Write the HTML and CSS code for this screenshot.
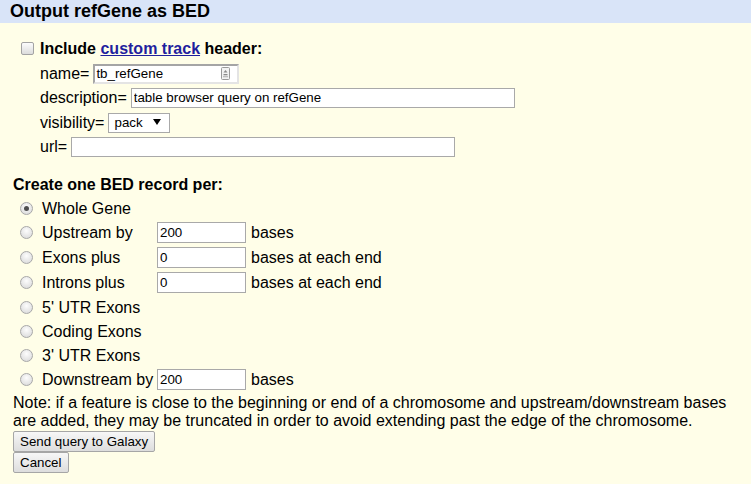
FILE: index.html
```html
<!DOCTYPE html>
<html>
<head>
<meta charset="utf-8">
<link rel="stylesheet" href="styles.css">
</head>
<body>
<div class="title">Output refGene as BED</div>
<form class="main">
  <label class="check-row">
    <input type="checkbox" class="cb">
    <span class="bold">Include <a href="#" class="link">custom track</a> header:</span>
  </label>
  <div class="fields">
    <div class="field">
      <span>name=</span>
      <span class="name-wrap">
        <input type="text" class="txt name-input" value="tb_refGene">
        <svg class="autofill" width="9" height="13" viewBox="0 0 9 13"><rect x="0.5" y="0.5" width="8" height="12" rx="1" fill="#f3f3f3" stroke="#9a9a9a"/><path d="M4.5 3 L6.5 5.5 L2.5 5.5 Z" fill="#8a8a8a"/><rect x="2.5" y="7" width="4" height="1.3" fill="#8a8a8a"/><rect x="2" y="9" width="5" height="1.3" fill="#bdbdbd"/></svg>
      </span>
    </div>
    <div class="field">
      <span>description=</span>
      <input type="text" class="txt wide" value="table browser query on refGene">
    </div>
    <div class="field">
      <span>visibility=</span>
      <span class="sel-wrap">
        <select class="sel"><option>pack</option></select>
        <svg class="arrow" width="8" height="6" viewBox="0 0 8 6"><path d="M0 0 H8 L4 6 Z" fill="#000"/></svg>
      </span>
    </div>
    <div class="field">
      <span>url=</span>
      <input type="text" class="txt wide" value="">
    </div>
  </div>

  <div class="heading bold">Create one BED record per:</div>
  <div class="options">
    <label class="opt"><input type="radio" name="r" class="rd" checked><span class="lbl">Whole Gene</span></label>
    <label class="opt tall"><input type="radio" name="r" class="rd"><span class="lbl">Upstream by</span><input type="text" class="txt num" value="200"><span class="suf">bases</span></label>
    <label class="opt tall"><input type="radio" name="r" class="rd"><span class="lbl">Exons plus</span><input type="text" class="txt num" value="0"><span class="suf">bases at each end</span></label>
    <label class="opt tall"><input type="radio" name="r" class="rd"><span class="lbl">Introns plus</span><input type="text" class="txt num" value="0"><span class="suf">bases at each end</span></label>
    <label class="opt"><input type="radio" name="r" class="rd"><span class="lbl">5' UTR Exons</span></label>
    <label class="opt"><input type="radio" name="r" class="rd"><span class="lbl">Coding Exons</span></label>
    <label class="opt"><input type="radio" name="r" class="rd"><span class="lbl">3' UTR Exons</span></label>
    <label class="opt tall"><input type="radio" name="r" class="rd"><span class="lbl">Downstream by</span><input type="text" class="txt num" value="200"><span class="suf">bases</span></label>
  </div>
  <p class="note">Note: if a feature is close to the beginning or end of a chromosome and upstream/downstream bases are added, they may be truncated in order to avoid extending past the edge of the chromosome.</p>
  <div class="buttons">
    <button type="button" class="btn">Send query to Galaxy</button>
    <button type="button" class="btn">Cancel</button>
  </div>
</form>
</body>
</html>
```

FILE: styles.css
```css
html, body {
  margin: 0;
  padding: 0;
}
body {
  background: #fffee8;
  font-family: "Liberation Sans", Arial, sans-serif;
  font-size: 16px;
  color: #000;
}
.title {
  background: #d9e4f8;
  height: 23px;
  line-height: 23px;
  font-size: 18px;
  font-weight: bold;
  padding-left: 10px;
}
.main {
  margin: 0;
  padding: 16px 0 0 13px;
}
.bold {
  font-weight: bold;
}
.link {
  color: #1f1f9e;
  text-decoration: underline;
}
.check-row {
  display: flex;
  align-items: center;
  height: 19px;
  line-height: 19px;
  padding-left: 8px;
}
.cb {
  appearance: none;
  -webkit-appearance: none;
  width: 13px;
  height: 13px;
  margin: 0 6px 0 0;
  border: 1px solid #a3a3a3;
  border-radius: 2px;
  background: linear-gradient(#fcfcfc, #dcdcdc);
  box-sizing: border-box;
}
.fields {
  display: flex;
  flex-direction: column;
  gap: 4.5px;
  margin-top: 5px;
  padding-left: 27px;
}
.field {
  display: flex;
  align-items: center;
  gap: 4px;
  height: 20px;
  line-height: 19px;
}
.txt {
  box-sizing: border-box;
  height: 20px;
  margin: 0;
  padding: 1px 2px;
  border: 1px solid #a9a9a9;
  background: #fff;
  font-family: "Liberation Sans", Arial, sans-serif;
  font-size: 13.33px;
  color: #000;
  outline: none;
}
.name-wrap {
  position: relative;
  display: inline-block;
  height: 20px;
}
.name-input {
  width: 146px;
  border-width: 2px;
  border-color: #a5a5a5 #e4e4e4 #e4e4e4 #a5a5a5;
  padding: 0 1px;
}
.autofill {
  position: absolute;
  left: 128px;
  top: 4px;
}
.wide {
  width: 384px;
}
.sel-wrap {
  position: relative;
  display: inline-block;
  height: 20px;
}
.sel {
  appearance: none;
  -webkit-appearance: none;
  box-sizing: border-box;
  width: 62px;
  height: 20px;
  margin: 0;
  padding: 0 0 0 5px;
  border: 1px solid #a9a9a9;
  border-radius: 0;
  background: #fff;
  font-family: "Liberation Sans", Arial, sans-serif;
  font-size: 13.33px;
  color: #000;
}
.arrow {
  position: absolute;
  right: 9px;
  top: 7px;
  pointer-events: none;
}
.heading {
  margin-top: 18.5px;
  line-height: 19px;
}
.options {
  margin-top: 2px;
  display: flex;
  flex-direction: column;
}
.opt {
  display: flex;
  align-items: center;
  height: 24px;
  line-height: 19px;
  padding-left: 7px;
}
.opt.tall {
  height: 25px;
}
.rd {
  appearance: none;
  -webkit-appearance: none;
  box-sizing: border-box;
  width: 13px;
  height: 13px;
  margin: 0 9px 0 0;
  border: 1px solid #a8a8a8;
  border-radius: 50%;
  background: radial-gradient(circle at 50% 35%, #fdfdfd, #d6d6d6);
  display: grid;
  place-items: center;
}
.rd:checked::after {
  content: "";
  width: 5px;
  height: 5px;
  border-radius: 50%;
  background: #4e4e4e;
}
.lbl {
  width: 115px;
}
.num {
  width: 89px;
  height: 21px;
}
.suf {
  margin-left: 5px;
}
.note {
  margin: 1.5px 0 0 0;
  line-height: 18px;
  padding-right: 8px;
}
.buttons {
  display: flex;
  flex-direction: column;
  align-items: flex-start;
  margin-top: 1px;
}
.btn {
  display: block;
  box-sizing: border-box;
  height: 21px;
  margin: 0;
  padding: 0 6px;
  border: 1px solid #a6a6a6;
  border-radius: 2px;
  background: linear-gradient(#f7f7f7, #dddddd);
  font-family: "Liberation Sans", Arial, sans-serif;
  font-size: 13.33px;
  color: #000;
}
```
